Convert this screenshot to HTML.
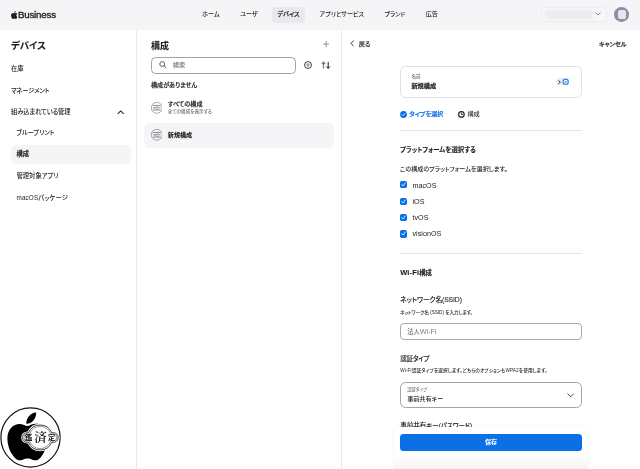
<!DOCTYPE html>
<html lang="ja">
<head>
<meta charset="utf-8">
<title>Apple Business</title>
<style>
*{box-sizing:border-box;margin:0;padding:0}
html,body{width:640px;height:469px;overflow:hidden;background:#fff}
body{position:relative;font-family:"Liberation Sans","Noto Sans CJK JP",sans-serif;color:#1d1d1f;font-size:6.5px;font-weight:500;-webkit-font-smoothing:antialiased;font-feature-settings:"palt"}
.t{position:absolute;white-space:nowrap;line-height:10px;height:10px;margin-top:-5px}
.b{font-weight:700;-webkit-text-stroke:0.100px currentColor}
.m{font-weight:500;-webkit-text-stroke:0.18px currentColor}
.g{color:#6e6e73}
.abs{position:absolute}
#top{position:absolute;left:0;top:0;width:640px;height:29.7px;background:#f5f5f7}
.vline{position:absolute;top:29.700px;width:1px;height:440px;background:#eaeaee}
.hline{position:absolute;height:1px;background:#e6e6ea;left:400px;width:182px}
.cb{position:absolute;left:399.900px;width:7px;height:7.200px;border-radius:1.700px;background:#0b6fe6}
.cb svg{position:absolute;left:0;top:0.100px;width:7px;height:7px}
</style>
</head>
<body><div id="wrap" style="position:absolute;left:0;top:0;width:640px;height:469px;will-change:transform">
<!-- TOP BAR -->
<div id="top"></div>
<svg class="abs" style="left:10.700px;top:10.700px;width:6.500px;height:7.900px" viewBox="0 -10 814 1010"><path fill="#1d1d1f" d="M788 341c-6 4-108 62-108 190 0 148 130 201 134 202-1 3-21 72-69 143-43 62-88 124-157 124s-86-40-165-40c-77 0-105 41-168 41s-107-57-157-128C40 790 0 660 0 537c0-198 129-303 255-303 67 0 123 44 165 44 40 0 103-47 179-47 29 0 133 3 201 101zM551 156c32-38 54-90 54-142 0-7-1-15-2-20-51 2-112 34-149 77-29 33-56 85-56 138 0 8 1 16 2 19 3 1 8 2 14 2 46 0 104-31 137-74z"/></svg>
<div class="t" style="left:18px;top:14.900px;font-size:9.700px;letter-spacing:-0.19px;font-weight:400;-webkit-text-stroke:0.350px #1d1d1f">Business</div>

<div class="t" style="left:202.200px;top:14.300px;font-size:6.100px">ホーム</div>
<div class="t" style="left:240px;top:14.300px;font-size:6.100px">ユーザ</div>
<div class="abs" style="left:272.300px;top:6.500px;width:32.500px;height:16px;border-radius:4px;background:#e8e8ed"></div>
<div class="t m" style="left:277.500px;top:14.300px;font-size:6.100px">デバイス</div>
<div class="t" style="left:319.600px;top:14.300px;font-size:6.100px">アプリとサービス</div>
<div class="t" style="left:384.500px;top:14.300px;font-size:6.100px">ブランド</div>
<div class="t" style="left:425.700px;top:14.300px;font-size:6.100px">広告</div>

<div class="abs" style="left:540.500px;top:6.500px;width:66.700px;height:15.500px;border-radius:4px;border:1px solid #ededf0;background:#f7f7f9"></div>
<div class="abs" style="left:545px;top:10px;width:48px;height:8.5px;border-radius:2px;background:#ececef;filter:blur(1px)"></div>
<svg class="abs" style="left:594.5px;top:12px;width:6px;height:4px" viewBox="0 0 12 8"><path d="M1.5 1.5 6 6l4.500-4.500" fill="none" stroke="#6e6e73" stroke-width="1.6" stroke-linecap="round" stroke-linejoin="round"/></svg>
<div class="abs" style="left:614.400px;top:7.100px;width:14.700px;height:14.700px;border-radius:50%;background:#8b90a5"></div>
<div class="abs" style="left:617.600px;top:9.900px;width:8.800px;height:9.200px;border-radius:2px;background:#e6e7ee"></div>

<!-- SIDEBAR -->
<div class="t b" style="left:11px;top:45.5px;font-size:9.4px">デバイス</div>
<div class="t" style="left:11px;top:69px;font-size:6.3px">在庫</div>
<div class="t" style="left:11px;top:90.500px;font-size:6.300px;letter-spacing:-0.200px">マネージメント</div>
<div class="t" style="left:11px;top:112.200px;font-size:6.300px;letter-spacing:-0.120px">組み込まれている管理</div>
<svg class="abs" style="left:117.200px;top:109.500px;width:7.400px;height:4.700px" viewBox="0 0 14.800 9.400"><path d="M1.700 7.700 7.400 1.900l5.700 5.800" fill="none" stroke="#2c2c2e" stroke-width="2.100" stroke-linecap="round" stroke-linejoin="round"/></svg>
<div class="t" style="left:16.500px;top:132.500px;font-size:6.300px;letter-spacing:-0.080px">ブループリント</div>
<div class="abs" style="left:11px;top:144.5px;width:119.5px;height:19.5px;border-radius:5px;background:#f5f5f7"></div>
<div class="t b" style="left:16.5px;top:154.2px;font-size:6.3px">構成</div>
<div class="t" style="left:16.5px;top:175.8px;font-size:6.3px">管理対象アプリ</div>
<div class="t" style="left:16.500px;top:197.500px;font-size:6.300px;letter-spacing:0.150px">macOSパッケージ</div>
<div class="vline" style="left:136px"></div>

<!-- MIDDLE -->
<div class="t b" style="left:151px;top:46px;font-size:9px">構成</div>
<svg class="abs" style="left:322.500px;top:41.400px;width:6.200px;height:6.200px" viewBox="0 0 12 12"><path d="M6 0.700v10.600M0.700 6h10.600" fill="none" stroke="#77777c" stroke-width="1.500" stroke-linecap="round"/></svg>
<div class="abs" style="left:151px;top:56.500px;width:144.700px;height:17.100px;border-radius:4.500px;border:1px solid #a2a2a7;background:#fff"></div>
<svg class="abs" style="left:159px;top:61.400px;width:8px;height:8px" viewBox="0 0 16 16"><circle cx="6.400" cy="6" r="4.900" fill="none" stroke="#48484c" stroke-width="1.700"/><path d="M10.100 9.700 14.300 13.700" stroke="#48484c" stroke-width="1.900" stroke-linecap="round"/></svg>
<div class="t" style="left:172.800px;top:65.300px;font-size:6.200px;color:#6e6e73">検索</div>
<svg class="abs" style="left:303.700px;top:60.750px;width:8px;height:8px" viewBox="0 0 16 16"><circle cx="8" cy="8" r="6.900" fill="none" stroke="#1d1d1f" stroke-width="1.700"/><path d="M5.200 6.200h5.600M6.200 8.400h3.600M7.200 10.600h1.600" stroke="#55555a" stroke-width="1.300" stroke-linecap="round"/></svg>
<svg class="abs" style="left:321.100px;top:60.800px;width:9.600px;height:8.400px" viewBox="0 0 19.200 16.800"><path d="M5 14V2.400M2.200 5.400 5 2.400l2.800 3" fill="none" stroke="#77777c" stroke-width="2.500" stroke-linecap="round" stroke-linejoin="round"/><path d="M14.400 2.400v12M11.600 11.600l2.800 3 2.800-3" fill="none" stroke="#1d1d1f" stroke-width="2" stroke-linecap="round" stroke-linejoin="round"/></svg>
<div class="t m" style="left:151px;top:85px;font-size:6.1px">構成がありません</div>

<svg class="abs" style="left:150.750px;top:102px;width:11.600px;height:11.600px" viewBox="0 0 24 24"><circle cx="12" cy="12" r="11.300" fill="none" stroke="#68686d" stroke-width="1.200"/><path d="M5 7.400h14M5 12h14M5 16.600h14" stroke="#4a4a4f" stroke-width="1.300" stroke-linecap="round"/><path d="M13 7.400v2M10 12v2M14 14.600v2" stroke="#6e6e73" stroke-width="1.200"/></svg>
<div class="t m" style="left:167.800px;top:104px;font-size:6.1px">すべての構成</div>
<div class="t g" style="left:167.800px;top:112.2px;font-size:4.6px">全ての構成を表示する</div>

<div class="abs" style="left:144px;top:123px;width:190px;height:25px;border-radius:5px;background:#f5f5f7"></div>
<svg class="abs" style="left:150.750px;top:129.300px;width:11.600px;height:11.600px" viewBox="0 0 24 24"><circle cx="12" cy="12" r="11.300" fill="none" stroke="#68686d" stroke-width="1.200"/><path d="M5 7.400h14M5 12h14M5 16.600h14" stroke="#4a4a4f" stroke-width="1.300" stroke-linecap="round"/><path d="M13 7.400v2M10 12v2M14 14.600v2" stroke="#6e6e73" stroke-width="1.200"/></svg>
<div class="t b" style="left:167.800px;top:134.800px;font-size:6.1px">新規構成</div>
<div class="vline" style="left:341px"></div>

<!-- RIGHT PANEL -->
<svg class="abs" style="left:349.600px;top:40.200px;width:4.400px;height:6.800px" viewBox="0 0 8.800 13.600"><path d="M7 1.500 1.900 6.800l5.100 5.300" fill="none" stroke="#2c2c2e" stroke-width="1.900" stroke-linecap="round" stroke-linejoin="round"/></svg>
<div class="t" style="left:358.700px;top:44.200px;font-size:6.200px;-webkit-text-stroke:0.080px #1d1d1f">戻る</div>
<div class="t m" style="left:599px;top:44.300px;font-size:6.1px">キャンセル</div>

<div class="abs" style="left:399.500px;top:65.500px;width:182.800px;height:32.300px;border-radius:5.500px;border:1px solid #dfdfe4;background:#fff"></div>
<div class="t g" style="left:411.400px;top:77.300px;font-size:4.600px">名前</div>
<div class="abs" style="left:411px;top:82px;width:25.200px;height:7.400px;background:#ececef;border-bottom:0.500px solid #c9c9ce"></div>
<div class="t b" style="left:411.400px;top:86.100px;font-size:6.200px">新規構成</div>
<div class="abs" style="left:556.200px;top:78.100px;width:13.300px;height:7.300px;border-radius:4px;background:#ececef"></div>
<svg class="abs" style="left:558.400px;top:79.600px;width:3.200px;height:4.400px" viewBox="0 0 6.400 8.800"><path d="M1.600 1.400 4.600 4.400l-3 3" fill="none" stroke="#1d1d1f" stroke-width="1.900" stroke-linecap="round" stroke-linejoin="round"/></svg>
<svg class="abs" style="left:562.300px;top:78.050px;width:7.400px;height:7.400px;overflow:visible" viewBox="0 0 14.800 14.800"><circle cx="7.400" cy="7.400" r="5.200" fill="#fff" stroke="#1a84ff" stroke-width="2.300"/><circle cx="7.400" cy="7.400" r="2.100" fill="#8e8e93"/></svg>

<svg class="abs" style="left:399.900px;top:110.700px;width:7px;height:7px" viewBox="0 0 12 12"><circle cx="6" cy="6" r="5.800" fill="#0b6fe6"/><path d="M3.500 6.200 5.300 8l3.300-3.800" fill="none" stroke="#fff" stroke-width="1.300" stroke-linecap="round" stroke-linejoin="round"/></svg>
<div class="t m" style="left:409.300px;top:114.300px;font-size:6.100px;color:#0b6fe6">タイプを選択</div>
<svg class="abs" style="left:458.100px;top:110.900px;width:6.800px;height:6.800px" viewBox="0 0 12 12"><circle cx="6" cy="6" r="4.900" fill="none" stroke="#1d1d1f" stroke-width="2"/><path d="M6 3.200V6.300H8.600" fill="none" stroke="#1d1d1f" stroke-width="1.600"/></svg>
<div class="t" style="left:467.400px;top:114.300px;font-size:6.200px;color:#333336">構成</div>
<div class="hline" style="top:130.100px"></div>

<div class="t b" style="left:400px;top:150.200px;font-size:6.400px">プラットフォームを選択する</div>
<div class="t" style="left:400px;top:168.800px;font-size:6.100px">この構成のプラットフォームを選択します。</div>

<div class="cb" style="top:181.200px"><svg viewBox="0 0 12 12"><path d="M3 6.300 5.200 8.500l3.800-5" fill="none" stroke="#fff" stroke-width="1.500" stroke-linecap="round" stroke-linejoin="round"/></svg></div>
<div class="t" style="left:412.500px;top:185.500px;font-size:7.200px">macOS</div>
<div class="cb" style="top:197.600px"><svg viewBox="0 0 12 12"><path d="M3 6.300 5.200 8.500l3.800-5" fill="none" stroke="#fff" stroke-width="1.500" stroke-linecap="round" stroke-linejoin="round"/></svg></div>
<div class="t" style="left:412.500px;top:201.700px;font-size:7.200px">iOS</div>
<div class="cb" style="top:214px"><svg viewBox="0 0 12 12"><path d="M3 6.300 5.200 8.500l3.800-5" fill="none" stroke="#fff" stroke-width="1.500" stroke-linecap="round" stroke-linejoin="round"/></svg></div>
<div class="t" style="left:412.500px;top:218px;font-size:7.200px">tvOS</div>
<div class="cb" style="top:230.400px"><svg viewBox="0 0 12 12"><path d="M3 6.300 5.200 8.500l3.800-5" fill="none" stroke="#fff" stroke-width="1.500" stroke-linecap="round" stroke-linejoin="round"/></svg></div>
<div class="t" style="left:412.500px;top:234.200px;font-size:7.200px">visionOS</div>
<div class="hline" style="top:253px"></div>

<div class="t b" style="left:400.200px;top:273.200px;font-size:6.400px"><span style="font-size:7.500px;letter-spacing:0.150px">Wi-Fi</span>構成</div>
<div class="t" style="left:400.200px;top:300.200px;font-size:6.800px;word-spacing:-2px;letter-spacing:-0.100px;-webkit-text-stroke:0.080px #1d1d1f">ネットワーク名 (SSID)</div>
<div class="t" style="left:400px;top:312.700px;font-size:4.600px">ネットワーク名 (SSID) を入力します。</div>
<div class="abs" style="left:399.600px;top:323.300px;width:182.600px;height:17px;border-radius:4px;border:1px solid #a8a8ad;background:#fff"></div>
<div class="t" style="left:407.200px;top:332.200px;font-size:6.600px;color:#7a7a7f;font-weight:500"><span style="font-size:6.300px">法人</span><span style="font-size:7.200px">Wi-Fi</span></div>
<div class="t" style="left:400.300px;top:358.700px;font-size:6.500px;letter-spacing:-0.250px;-webkit-text-stroke:0.080px #1d1d1f">認証タイプ</div>
<div class="t" style="left:400.300px;top:371.400px;font-size:4.700px;letter-spacing:0.080px">Wi-Fi認証タイプを選択します。どちらのオプションもWPA2を使用します。</div>
<div class="abs" style="left:399.600px;top:382.200px;width:182.600px;height:25.500px;border-radius:5.500px;border:1px solid #a2a2a7;background:#fff"></div>
<div class="t g" style="left:407.200px;top:389.800px;font-size:4.300px">認証タイプ</div>
<div class="t" style="left:407.200px;top:398.700px;font-size:6.200px;letter-spacing:-0.100px">事前共有キー</div>
<svg class="abs" style="left:566.900px;top:392.800px;width:7.400px;height:4.800px" viewBox="0 0 14.800 9.600"><path d="M1.600 1.600 7.400 7.600l5.800-6" fill="none" stroke="#333336" stroke-width="1.800" stroke-linecap="round" stroke-linejoin="round"/></svg>
<div class="t" style="left:400.300px;top:426.200px;font-size:6.600px;word-spacing:-1.800px;letter-spacing:-0.100px;-webkit-text-stroke:0.080px #1d1d1f">事前共有キー (パスワード)</div>

<!-- footer -->
<div class="abs" style="left:393.500px;top:427px;width:194px;height:42px;background:linear-gradient(to bottom,#fff 0,#fff 62%,#f5f5f5 100%);box-shadow:0 0 4px rgba(0,0,0,.045)"></div>
<div class="abs" style="left:400px;top:433.900px;width:182px;height:17px;border-radius:3.500px;background:#0b6fe6"></div>
<div class="t m" style="left:470.500px;width:41px;text-align:center;top:442.300px;font-size:6.100px;color:#fff">保存</div>

<!-- stamp logo -->
<svg class="abs" style="left:0;top:399px;width:68px;height:70px" viewBox="0 0 68 70">
<circle cx="30.500" cy="38.500" r="29.600" fill="#fff" stroke="#111" stroke-width="1.200"/>
<g transform="translate(7.400,13.800) scale(0.0475)"><path fill="#000" d="M788 341c-6 4-108 62-108 190 0 148 130 201 134 202-1 3-21 72-69 143-43 62-88 124-157 124s-86-40-165-40c-77 0-105 41-168 41s-107-57-157-128C40 790 0 660 0 537c0-198 129-303 255-303 67 0 123 44 165 44 40 0 103-47 179-47 29 0 133 3 201 101zM551 156c32-38 54-90 54-142 0-7-1-15-2-20-51 2-112 34-149 77-29 33-56 85-56 138 0 8 1 16 2 19 3 1 8 2 14 2 46 0 104-31 137-74z"/></g>
<path d="M27.300 33.700H28.560A12.500 12.500 0 0 1 51.640 33.700H53.400A4.800 4.800 0 0 1 53.400 43.300H51.640A12.500 12.500 0 0 1 28.560 43.300H27.300A4.800 4.800 0 0 1 27.300 33.700Z" fill="#fff" stroke="#fff" stroke-width="2.600"/>
<path d="M27.300 33.700H28.560A12.500 12.500 0 0 1 51.640 33.700H53.400A4.800 4.800 0 0 1 53.400 43.300H51.640A12.500 12.500 0 0 1 28.560 43.300H27.300A4.800 4.800 0 0 1 27.300 33.700Z" fill="#fff" stroke="#111" stroke-width="0.800"/>
<path d="M27.300 35.100H29.530A11.100 11.100 0 0 1 50.670 35.100H53.400A3.400 3.400 0 0 1 53.400 41.900H50.670A11.100 11.100 0 0 1 29.530 41.900H27.300A3.400 3.400 0 0 1 27.300 35.100Z" fill="none" stroke="#111" stroke-width="0.450"/>
<text x="28.700" y="41" font-family="'Liberation Sans','Noto Sans CJK JP',sans-serif" font-size="7.200" font-weight="700" text-anchor="middle" fill="#111">鑑</text>
<text x="40.400" y="43.100" font-family="'Liberation Serif','Noto Serif CJK JP',serif" font-size="12.500" font-weight="600" text-anchor="middle" fill="#111">済</text>
<text x="51.500" y="41" font-family="'Liberation Sans','Noto Sans CJK JP',sans-serif" font-size="7.200" font-weight="700" text-anchor="middle" fill="#111">定</text>
</svg>
</div></body>
</html>
